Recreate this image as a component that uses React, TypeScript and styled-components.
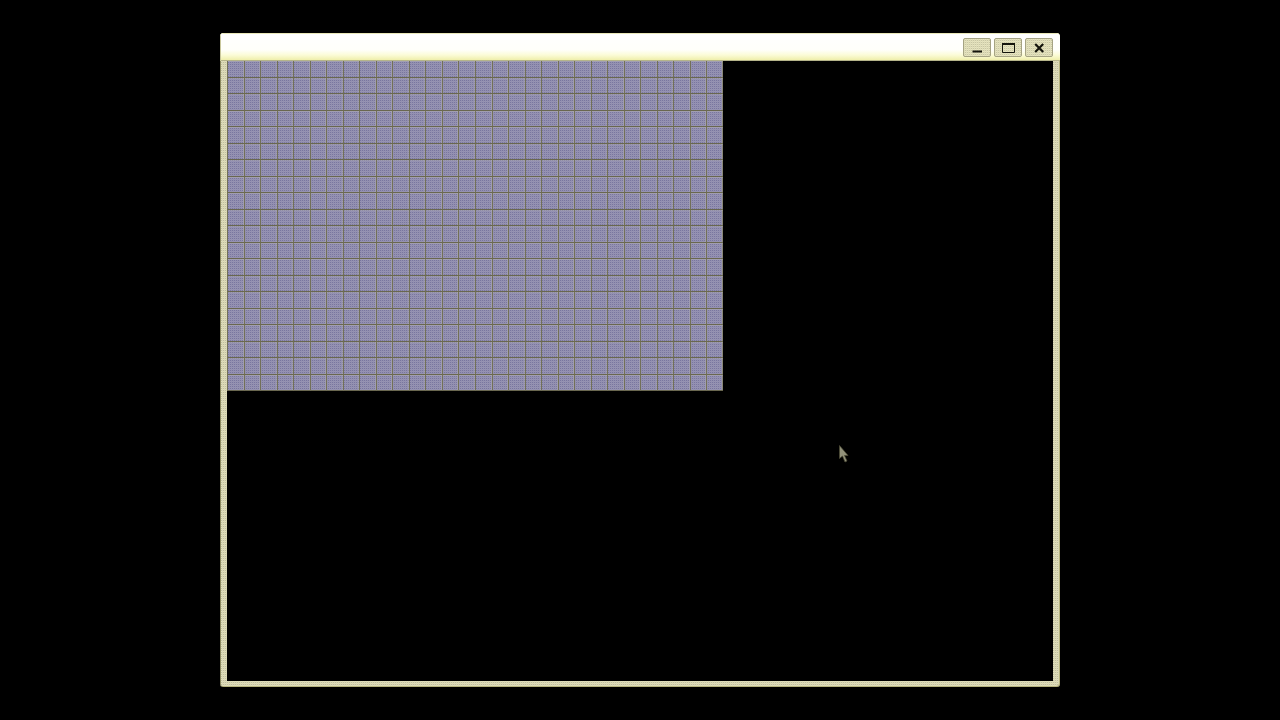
import React from 'react';
import styled, { createGlobalStyle, css } from 'styled-components';

const COLUMNS = 30;
const ROWS = 20;

const GlobalStyle = createGlobalStyle`
  body { margin: 0; background: #000; overflow: hidden; font-family: "Liberation Sans", Arial, sans-serif; }
`;

const dither = (dot: string, base: string, alternate: string) => css`
  background-color: ${dot};
  background-image:
    repeating-linear-gradient(90deg, ${base} 0 1px, transparent 1px 2px),
    repeating-linear-gradient(180deg, ${alternate} 0 1px, transparent 1px 2px);
`;

const Desktop = styled.main`
  box-sizing: border-box;
  width: 1280px;
  height: 720px;
  padding: 33px 0 0 220px;
  background: #000;
`;

const Window = styled.section`
  box-sizing: border-box;
  display: flex;
  flex-direction: column;
  width: 840px;
  height: 654px;
  border-radius: 4px 4px 3px 3px;
  overflow: hidden;
  ${dither('#bfbda0', '#dad8b4', '#e2e0bc')}
  box-shadow: inset 1px 0 #8b895f, inset -1px -1px #b5b27e;
`;

const TitleBar = styled.header`
  box-sizing: border-box;
  display: flex;
  flex: 0 0 28px;
  justify-content: flex-end;
  gap: 3px;
  padding: 5px 7px 0 0;
  background:
    linear-gradient(#e9e8b8 1px, transparent 1px),
    linear-gradient(90deg, #c9c79c 1px, transparent 1px),
    linear-gradient(transparent 27px, #b5b48a 27px),
    linear-gradient(#fff 0, #fffffa 17px, rgba(255, 255, 226, 0.8) 22px, rgba(244, 243, 170, 0.2) 27px),
    #eeeeac;
`;

const WindowButton = styled.button`
  box-sizing: border-box;
  display: flex;
  width: 28px;
  height: 19px;
  padding: 0;
  border: 1px solid #a5a383;
  border-radius: 2px;
  ${dither('#c8c6a4', '#dfddb8', '#e8e6c2')}
`;

const ButtonIcon = styled.svg`
  display: block;
  width: 26px;
  height: 17px;
  fill: none;
  stroke: #15150d;
`;

const Client = styled.div`
  flex: 1;
  margin: 0 7px 6px;
  background: #000;
`;

const Board = styled.div`
  display: grid;
  grid-template-columns: repeat(${COLUMNS}, 1fr);
  grid-template-rows: repeat(${ROWS}, 1fr);
  width: 496px;
  height: 330px;
  ${dither('#79769f', '#9390b0', '#9794b4')}
  box-shadow: inset -1px 0 #727058;
`;

const Cell = styled.div`
  border-left: 1px solid #727058;
  border-bottom: 1px solid #69674f;
  box-shadow: inset 0 1px rgba(185, 183, 180, 0.35), inset -1px 0 rgba(185, 183, 180, 0.35);
`;

const Cursor = styled.svg`
  position: absolute;
  left: 838px;
  top: 444px;
  width: 12px;
  height: 20px;
`;

const icons = [
  { label: 'Minimize', drawing: <path d="M8.5 12.5h9.5" strokeWidth="2" /> },
  {
    label: 'Maximize',
    drawing: (
      <>
        <path d="M7.5 4.5h12v9h-12z" />
        <path d="M7 5h13" strokeWidth="2" />
      </>
    ),
  },
  { label: 'Close', drawing: <path d="M9.2 5l8 8M17.2 5l-8 8" strokeWidth="2.2" /> },
];

export default function App() {
  return (
    <Desktop>
      <GlobalStyle />
      <Window>
        <TitleBar>
          {icons.map(({ label, drawing }) => (
            <WindowButton key={label} aria-label={label}>
              <ButtonIcon viewBox="0 0 26 17">{drawing}</ButtonIcon>
            </WindowButton>
          ))}
        </TitleBar>
        <Client>
          <Board>
            {Array.from({ length: COLUMNS * ROWS }, (_, i) => (
              <Cell key={i} />
            ))}
          </Board>
        </Client>
      </Window>
      <Cursor viewBox="0 0 12 20">
        <path d="M1.5 1.5v13l3-2.5 2.5 6 2-1-2.5-5.5H10z" fill="#92917a" stroke="#4a4934" strokeWidth="0.7" />
      </Cursor>
    </Desktop>
  );
}
